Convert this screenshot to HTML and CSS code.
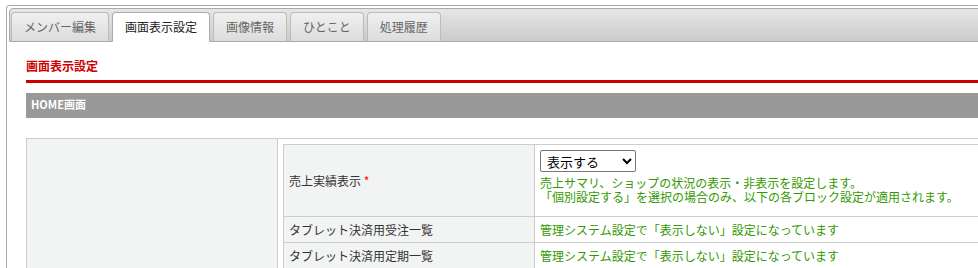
FILE: index.html
```html
<!DOCTYPE html>
<html lang="ja">
<head>
    <meta charset="UTF-8">
    <title>画面表示設定</title>
    <link rel="stylesheet" href="styles.css">
</head>
<body>

    <div class="panel">

        <!-- タブ -->
        <ul class="tabs">
            <li class="tab">メンバー編集</li>
            <li class="tab active">画面表示設定</li>
            <li class="tab">画像情報</li>
            <li class="tab">ひとこと</li>
            <li class="tab">処理履歴</li>
        </ul>

        <div class="content">
            <h2 class="page-title">画面表示設定</h2>

            <div class="section-bar">HOME画面</div>

            <table class="outer">
                <tr>
                    <td class="outer-side"></td>
                    <td class="outer-main">
                        <table class="form">
                            <tr>
                                <th>売上実績表示 <span class="req">*</span></th>
                                <td>
                                    <select class="sel">
                                        <option>表示する</option>
                                        <option>個別設定する</option>
                                    </select>
                                    <div class="help">
                                        売上サマリ、ショップの状況の表示・非表示を設定します。<br>
                                        「個別設定する」を選択の場合のみ、以下の各ブロック設定が適用されます。
                                    </div>
                                </td>
                            </tr>
                            <tr>
                                <th>タブレット決済用受注一覧</th>
                                <td class="note">管理システム設定で「表示しない」設定になっています</td>
                            </tr>
                            <tr>
                                <th>タブレット決済用定期一覧</th>
                                <td class="note">管理システム設定で「表示しない」設定になっています</td>
                            </tr>
                        </table>
                    </td>
                </tr>
            </table>
        </div>

    </div>

</body>
</html>
```

FILE: styles.css
```css
/* ページ全体 */
body {
    margin: 0;
    font-family: "Noto Sans CJK JP", "Noto Sans", sans-serif;
    font-size: 12px;
    color: #333;
    background: #fff;
    overflow: hidden;
}

/* 外枠 */
.panel {
    margin: 5px 0 0 6px;
    width: 1200px;
    height: 400px;
    padding: 2px;
    border: 1px solid #aaa;
    border-right: none;
    border-radius: 4px 0 0 0;
}

/* タブバー */
.tabs {
    display: flex;
    align-items: flex-end;
    gap: 3px;
    list-style: none;
    margin: 0;
    padding: 0 0 0 1px;
    height: 32px;
    border: 1px solid #aaa;
    border-radius: 4px 0 0 0;
    background: linear-gradient(#e6e6e6, #cbcbcb);
}

.tab {
    height: 28px;
    line-height: 28px;
    padding: 0 12px;
    margin-bottom: -1px;
    border: 1px solid #bbb;
    border-bottom: 1px solid #aaa;
    border-radius: 4px 4px 0 0;
    background: linear-gradient(#f0f0f0, #dcdcdc);
    color: #666;
    font-size: 12px;
}

.tab.active {
    background: #fff;
    border-color: #aaa;
    border-bottom-color: #fff;
    color: #222;
}

/* コンテンツ */
.content {
    padding: 0 0 0 17px;
}

.page-title {
    margin: 15px 0 0;
    padding: 0 0 5px;
    font-size: 12px;
    line-height: 18px;
    font-weight: bold;
    color: #c00;
    border-bottom: 3px solid #c00;
}

.section-bar {
    margin-top: 10px;
    height: 25px;
    line-height: 22px;
    padding: 0 5px;
    background: #999;
    color: #fff;
    font-size: 11px;
    font-weight: bold;
}

/* 外側テーブル */
.outer {
    margin-top: 20px;
    width: 100%;
    border-collapse: collapse;
    border: 1px solid #ccc;
}

.outer td {
    padding: 5px;
    vertical-align: top;
}

.outer-side {
    width: 240px;
    background: #f2f3f3;
    border-right: 1px solid #ccc;
}

/* フォームテーブル */
.form {
    width: 100%;
    border-collapse: collapse;
    border: 1px solid #ccc;
}

.form th,
.form td {
    border: 1px solid #ccc;
    padding: 5px;
    line-height: 15px;
    text-align: left;
    vertical-align: middle;
}

.form th {
    width: 240px;
    background: #f2f3f3;
    font-weight: normal;
    color: #333;
}

.req {
    color: #f00;
}

.sel {
    display: block;
    width: 96px;
    height: 22px;
    padding: 0 2px;
    font-family: inherit;
    font-size: 13px;
    color: #000;
    border: 1px solid #767676;
    border-radius: 2px;
    background: #fff;
}

.help {
    margin: 4px 0 7px;
    line-height: 14px;
    color: #339900;
}

.note {
    color: #339900;
}
```
